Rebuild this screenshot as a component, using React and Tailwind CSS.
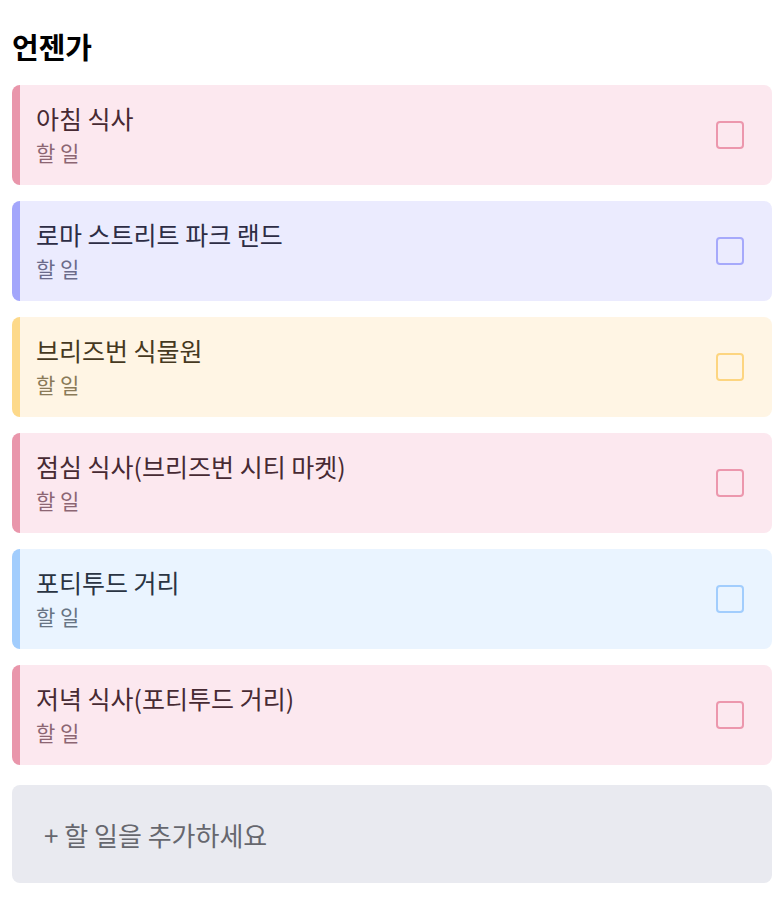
import React from "react";

const items = [
  { title: "아침 식사", bg: "bg-[#fce8ef]", border: "border-[#e996ab]", title_c: "text-[#472a33]", sub_c: "text-[#8c6673]", box: "border-[#ec97ad]" },
  { title: "로마 스트리트 파크 랜드", bg: "bg-[#ebebfe]", border: "border-[#a3a6fb]", title_c: "text-[#2d2d45]", sub_c: "text-[#6b6b8a]", box: "border-[#a6a9fb]" },
  { title: "브리즈번 식물원", bg: "bg-[#fff5e4]", border: "border-[#fdd98a]", title_c: "text-[#46391f]", sub_c: "text-[#8a7a58]", box: "border-[#fdd580]" },
  { title: "점심 식사(브리즈번 시티 마켓)", bg: "bg-[#fce8ef]", border: "border-[#e996ab]", title_c: "text-[#472a33]", sub_c: "text-[#8c6673]", box: "border-[#ec97ad]" },
  { title: "포티투드 거리", bg: "bg-[#eaf4ff]", border: "border-[#a2cdfd]", title_c: "text-[#2a3443]", sub_c: "text-[#687484]", box: "border-[#a2cdfd]" },
  { title: "저녁 식사(포티투드 거리)", bg: "bg-[#fce8ef]", border: "border-[#e996ab]", title_c: "text-[#472a33]", sub_c: "text-[#8c6673]", box: "border-[#ec97ad]" },
];

export default function App() {
  return (
    <div className="w-[784px] min-h-[903px] bg-white px-3 pt-[26px] font-['Noto_Sans_CJK_KR','Noto_Sans',sans-serif]">
      <h1 className="text-[29px] leading-[40px] font-bold text-black mb-[19px]">언젠가</h1>
      <div className="flex flex-col gap-4">
        {items.map((it, i) => (
          <div key={i} className={`h-[100px] rounded-[8px] border-l-8 ${it.border} ${it.bg} flex items-center pl-4 pr-7`}>
            <div className="flex-1 flex flex-col">
              <div className={`text-[25px] leading-[34px] ${it.title_c}`}>{it.title}</div>
              <div className={`text-[21px] leading-[34px] ${it.sub_c}`}>할 일</div>
            </div>
            <div className={`w-[28px] h-[28px] rounded-[4px] border-2 ${it.box}`}></div>
          </div>
        ))}
      </div>
      <div className="mt-5 h-[98px] rounded-[8px] bg-[#e9eaf0] flex items-center pl-[32px] text-[26px] text-[#66676e]">
        + 할 일을 추가하세요
      </div>
    </div>
  );
}
